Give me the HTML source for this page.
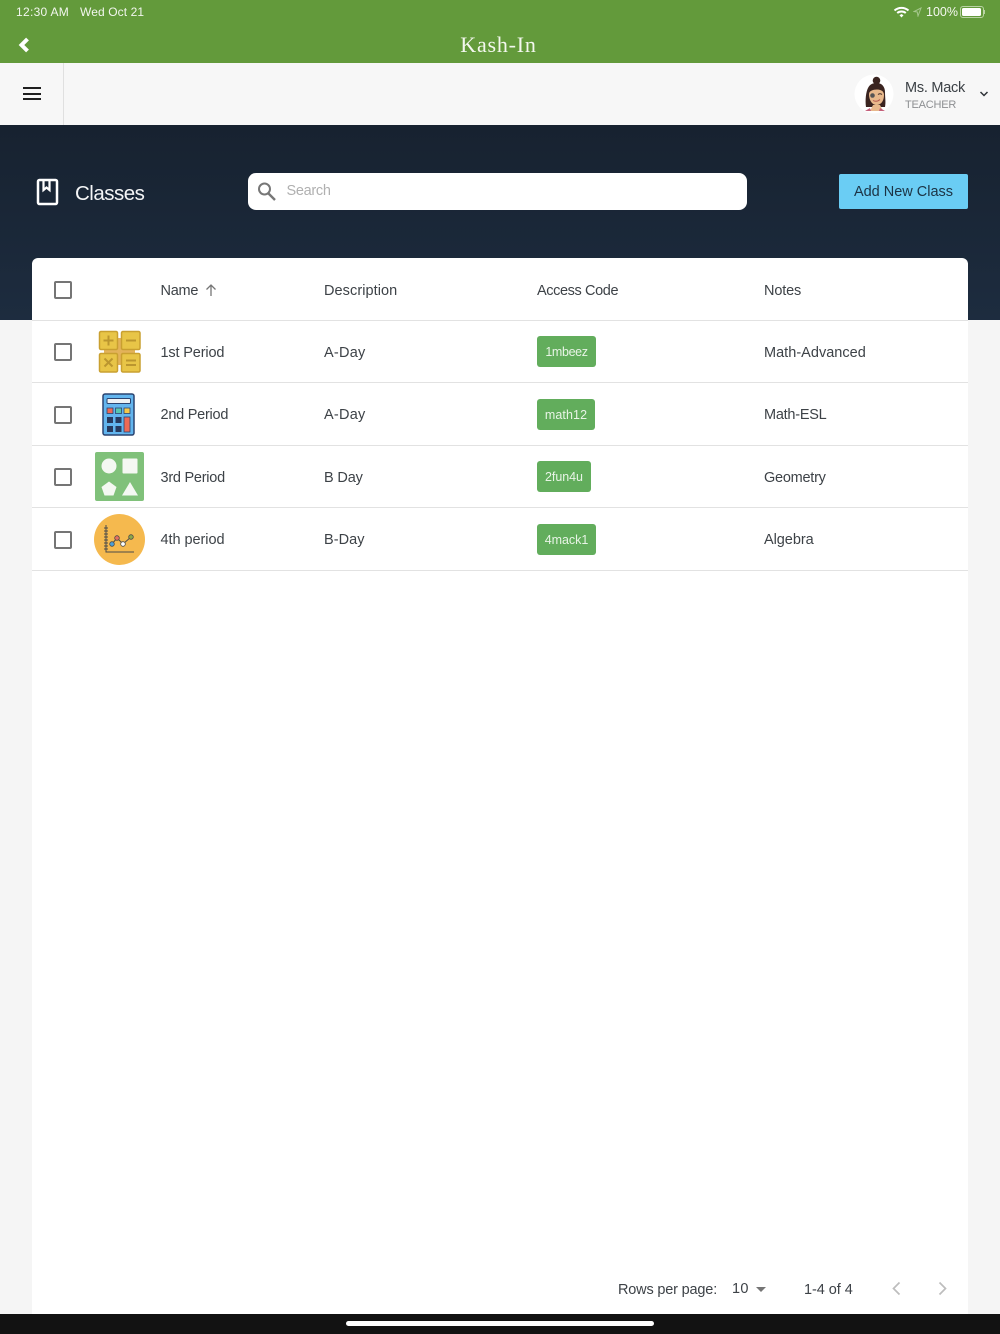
<!DOCTYPE html>
<html><head><meta charset="utf-8"><style>
html,body{margin:0;padding:0}
body{width:1000px;height:1334px;position:relative;overflow:hidden;background:#f5f5f5;font-family:"Liberation Sans",sans-serif;color:#3a3f45}
.a{position:absolute;white-space:nowrap}
.t{position:absolute;white-space:nowrap;font-size:14.5px;line-height:20px;color:#3d4247}
.cb{position:absolute;left:54px;width:14px;height:14px;border:2px solid #757575;border-radius:2px}
.line{position:absolute;left:32px;width:936px;height:1px;background:#e2e2e2}
.tag{position:absolute;left:537px;height:31px;border-radius:3px;background:#62ad5c;color:#e8f4e6;font-size:12.5px;line-height:33px;text-align:center}
</style></head><body>
<div class="a" style="left:0;top:0;width:1000px;height:63px;background:#639a3b"></div>
<div class="a" style="left:16px;top:5px;font-size:12px;line-height:14px;color:#f2f6ee;letter-spacing:.3px">12:30 AM</div>
<div class="a" style="left:80px;top:5px;font-size:12px;line-height:14px;color:#f2f6ee;letter-spacing:.1px">Wed Oct 21</div>
<svg class="a" style="left:893px;top:6px" width="17" height="12" viewBox="0 0 17 12"><path d="M1.500 4.500C5.500 1 11.500 1 15.500 4.500" stroke="#fff" stroke-width="2" fill="none"/><path d="M4.200 7C6.500 5 10.500 5 12.800 7" stroke="#fff" stroke-width="2" fill="none"/><path d="M6.500 9.300L8.500 8 10.500 9.300 8.500 11.500Z" fill="#fff"/></svg>
<svg class="a" style="left:913px;top:7px" width="9" height="10" viewBox="0 0 9 10"><path d="M8 1L1 4.500 4.300 5 5 9Z" fill="none" stroke="#a5c78c" stroke-width="1"/></svg>
<div class="a" style="left:926px;top:5px;font-size:12.5px;line-height:14px;color:#f5f8f0">100%</div>
<div class="a" style="left:960px;top:6px;width:22px;height:10px;border:1px solid #b9d3a4;border-radius:3px"></div>
<div class="a" style="left:962px;top:8px;width:19px;height:8px;background:#fff;border-radius:1.500px"></div>
<div class="a" style="left:984px;top:10px;width:1px;height:4px;background:#b9d3a4"></div>
<svg class="a" style="left:16px;top:36px" width="16" height="18" viewBox="0 0 16 18"><path d="M11.500 3L5.500 9l6 6" stroke="#fff" stroke-width="4" fill="none"/></svg>
<div class="a" style="left:0;top:33px;width:997px;text-align:center;font-family:'Liberation Serif',serif;font-size:22px;line-height:24px;color:#f3f7ee;letter-spacing:.8px">Kash-In</div>

<div class="a" style="left:0;top:63px;width:1000px;height:62px;background:#f7f7f7"></div>
<div class="a" style="left:63px;top:63px;width:1px;height:62px;background:#e0e0e0"></div>
<div class="a" style="left:23px;top:87px;width:18px;height:2px;background:#1f1f1f"></div>
<div class="a" style="left:23px;top:92.500px;width:18px;height:2px;background:#1f1f1f"></div>
<div class="a" style="left:23px;top:98px;width:18px;height:2px;background:#1f1f1f"></div>
<svg class="a" style="left:854px;top:74px" width="40" height="40" viewBox="0 0 40 40">
<circle cx="20" cy="20" r="19.500" fill="#fff"/>
<circle cx="22.500" cy="6.500" r="3.800" fill="#3a2420"/>
<path d="M12 33C11 26 12 18 14 14 16 10 19 9 23 9 28 9 31 13 31 18 31 24 32 28 31 33Z" fill="#3a2420"/>
<path d="M15 20C15 17 19 15.500 23 15.500 28 15.500 30 18 30 21 30 27 27 31 22.500 31 18 31 15 26 15 20Z" fill="#e8b98c"/>
<circle cx="18.500" cy="21.500" r="2.300" fill="#555"/><path d="M24 20.500q2-1.500 4 0" stroke="#3a2420" fill="none"/>
<path d="M19 26.500Q22.500 28.500 26 25.500" stroke="#b5584e" fill="none"/>
<path d="M16 37L19 31H26L29 37Z" fill="#e8b98c"/>
<path d="M11 37l5-3 1 3ZM31 37l-5-3-1 3Z" fill="#c4607a"/>
</svg>
<div class="a" style="left:905px;top:79px;font-size:14.500px;line-height:18px;color:#3b4045;letter-spacing:-.25px">Ms. Mack</div>
<div class="a" style="left:905px;top:98px;font-size:11px;line-height:14px;color:#8d8f92;letter-spacing:-.2px">TEACHER</div>
<svg class="a" style="left:979px;top:89px" width="10" height="10" viewBox="0 0 10 10"><path d="M1.500 3L5 6.500 8.500 3" stroke="#2f3338" stroke-width="1.500" fill="none"/></svg>

<div class="a" style="left:0;top:125px;width:1000px;height:195px;background:linear-gradient(#172230,#1d2c3f)"></div>
<svg class="a" style="left:36px;top:178px" width="23" height="28" viewBox="0 0 23 28"><rect x="2" y="2" width="19" height="24" rx="1.500" fill="none" stroke="#fff" stroke-width="2.500"/><path d="M7.500 2v10l3-2.500 3 2.500V2" fill="none" stroke="#fff" stroke-width="2.200"/></svg>
<div class="a" style="left:75px;top:181px;font-size:20.500px;line-height:26px;color:#f4f5f6;letter-spacing:-.5px">Classes</div>
<div class="a" style="left:248px;top:173px;width:499px;height:37px;background:#fff;border-radius:8px"></div>
<svg class="a" style="left:256px;top:181px" width="22" height="21" viewBox="0 0 22 21"><circle cx="8.500" cy="8" r="5.500" fill="none" stroke="#777" stroke-width="2"/><path d="M12.500 12.500L19 19" stroke="#777" stroke-width="2.400"/></svg>
<div class="a" style="left:286.500px;top:182px;font-size:14.500px;line-height:18px;color:#b0b0b0;letter-spacing:-.3px">Search</div>
<div class="a" style="left:839px;top:174px;width:129px;height:35px;background:#6acdf4;border-radius:2px;text-align:center;line-height:37px;font-size:14.500px;letter-spacing:0;color:#1c3344">Add New Class</div>

<div class="a" style="left:32px;top:258px;width:936px;height:1056px;background:#fff;border-radius:6px 6px 0 0"></div>
<div class="cb" style="top:281px"></div>
<div class="t" style="left:160.500px;top:281px;letter-spacing:-.25px">Name</div>
<svg class="a" style="left:204px;top:283px" width="14" height="14" viewBox="0 0 14 14"><path d="M7 13V2M2.500 6.500L7 2l4.500 4.500" stroke="#757575" stroke-width="1.300" fill="none"/></svg>
<div class="t" style="left:324px;top:281px;letter-spacing:.07px">Description</div>
<div class="t" style="left:537px;top:281px;letter-spacing:-.39px">Access Code</div>
<div class="t" style="left:764px;top:281px;letter-spacing:-.15px">Notes</div>
<div class="line" style="top:320px"></div>
<div class="line" style="top:382px"></div>
<div class="line" style="top:445px"></div>
<div class="line" style="top:507px"></div>
<div class="line" style="top:570px"></div>

<div class="cb" style="top:343px"></div>
<svg class="a" style="left:98px;top:330px" width="44" height="44" viewBox="0 0 44 44">
<rect x="6" y="8" width="31" height="27" fill="#e0ad4e"/><rect x="6" y="8" width="31" height="27" fill="#e3b25a"/>
<g fill="#e8c547" stroke="#c9a030" stroke-width="1.500"><rect x="1.500" y="1.500" width="18" height="18" rx="1.500"/><rect x="23.500" y="1.500" width="18.500" height="18" rx="1.500"/><rect x="1.500" y="23.500" width="18" height="18.500" rx="1.500"/><rect x="23.500" y="23.500" width="18.500" height="18.500" rx="1.500"/></g>
<g stroke="#bb962f" stroke-width="2" fill="none"><path d="M5.500 10.500h10M10.500 5.500v10M28 10.500h10M6.500 28.500l8 8M14.500 28.500l-8 8M28 30.500h10M28 35h10"/></g>
</svg>
<div class="t" style="left:160.500px;top:343px;letter-spacing:-.15px">1st Period</div>
<div class="t" style="left:324px;top:343px;letter-spacing:.25px">A-Day</div>
<div class="tag" style="top:336px;width:59px;letter-spacing:-.35px">1mbeez</div>
<div class="t" style="left:764px;top:343px;letter-spacing:.02px">Math-Advanced</div>

<div class="cb" style="top:406px"></div>
<svg class="a" style="left:102px;top:393px" width="34" height="43" viewBox="0 0 34 43">
<rect x="1" y="1" width="31" height="41" rx="2" fill="#63b5ee" stroke="#2b4470" stroke-width="1.500"/>
<rect x="5" y="5.500" width="23.500" height="5" rx="1" fill="#eef2f5" stroke="#2b4470"/>
<rect x="5" y="15" width="6" height="5.500" fill="#ee6a55" stroke="#2b4470" stroke-width=".8"/><rect x="13.500" y="15" width="6" height="5.500" fill="#58c6ae" stroke="#2b4470" stroke-width=".8"/><rect x="22" y="15" width="6" height="5.500" fill="#f5c84a" stroke="#2b4470" stroke-width=".8"/>
<rect x="5" y="24" width="6" height="6" fill="#283a5e"/><rect x="13.500" y="24" width="6" height="6" fill="#283a5e"/><rect x="5" y="33" width="6" height="6" fill="#283a5e"/><rect x="13.500" y="33" width="6" height="6" fill="#283a5e"/>
<rect x="22" y="24" width="6" height="15" fill="#ee6a55" stroke="#2b4470" stroke-width=".8"/>
</svg>
<div class="t" style="left:160.500px;top:405px;letter-spacing:-.25px">2nd Period</div>
<div class="t" style="left:324px;top:405px;letter-spacing:.25px">A-Day</div>
<div class="tag" style="top:399px;width:58px;letter-spacing:.1px">math12</div>
<div class="t" style="left:764px;top:405px;letter-spacing:-.25px">Math-ESL</div>

<div class="cb" style="top:468px"></div>
<svg class="a" style="left:95px;top:452px" width="49" height="49" viewBox="0 0 49 49">
<rect width="49" height="49" rx="2" fill="#80c17a"/>
<circle cx="14" cy="14" r="7.500" fill="#f4f8f2"/><rect x="27.500" y="6.500" width="15" height="15" rx="1" fill="#f4f8f2"/>
<path d="M14 29.500l7.500 5.500-3 8.500h-9l-3-8.500Z" fill="#f4f8f2"/><path d="M35 30l8 13.500H27Z" fill="#f4f8f2"/>
</svg>
<div class="t" style="left:160.500px;top:468px;letter-spacing:-.25px">3rd Period</div>
<div class="t" style="left:324px;top:468px;letter-spacing:-.15px">B Day</div>
<div class="tag" style="top:461px;width:54px;letter-spacing:-.05px">2fun4u</div>
<div class="t" style="left:764px;top:468px;letter-spacing:-.25px">Geometry</div>

<div class="cb" style="top:531px"></div>
<svg class="a" style="left:94px;top:514px" width="51" height="51" viewBox="0 0 51 51">
<circle cx="25.500" cy="25.500" r="25.500" fill="#f5b94e"/>
<path d="M12 11v27h28M10 14h4M10 17h4M10 20h4M10 23h4M10 26h4M10 29h4M10 32h4M10 35h4" stroke="#4a4a4a" stroke-width="1" fill="none"/>
<path d="M18 30L23 24 29 30 37 23" stroke="#4a4a4a" stroke-width="1" fill="none"/>
<circle cx="18" cy="30" r="2.300" fill="#4c9fd8" stroke="#4a4a4a" stroke-width=".8"/><circle cx="23" cy="24" r="2.300" fill="#e8705f" stroke="#4a4a4a" stroke-width=".8"/><circle cx="29" cy="30" r="2.300" fill="#fff" stroke="#4a4a4a" stroke-width=".8"/><circle cx="37" cy="23" r="2.300" fill="#8da848" stroke="#4a4a4a" stroke-width=".8"/>
</svg>
<div class="t" style="left:160.500px;top:530px;letter-spacing:-.05px">4th period</div>
<div class="t" style="left:324px;top:530px;letter-spacing:.05px">B-Day</div>
<div class="tag" style="top:524px;width:59px;letter-spacing:-.05px">4mack1</div>
<div class="t" style="left:764px;top:530px;letter-spacing:-.05px">Algebra</div>

<div class="t" style="left:618px;top:1280px;letter-spacing:-.18px">Rows per page:</div>
<div class="t" style="left:732px;top:1279px;letter-spacing:.25px">10</div>
<div class="a" style="left:756px;top:1287px;width:0;height:0;border-left:5px solid transparent;border-right:5px solid transparent;border-top:5px solid #757575"></div>
<div class="t" style="left:804px;top:1280px;letter-spacing:-.05px">1-4 of 4</div>
<svg class="a" style="left:889px;top:1280px" width="14" height="17" viewBox="0 0 14 17"><path d="M10.500 2.500L4.500 8.500l6 6" stroke="#bdbdbd" stroke-width="1.700" fill="none"/></svg>
<svg class="a" style="left:936px;top:1280px" width="14" height="17" viewBox="0 0 14 17"><path d="M3.500 2.500L9.500 8.500l-6 6" stroke="#bdbdbd" stroke-width="1.700" fill="none"/></svg>

<div class="a" style="left:0;top:1314px;width:1000px;height:20px;background:#121212"></div>
<div class="a" style="left:346px;top:1321px;width:308px;height:5px;border-radius:3px;background:#fff"></div>
</body></html>
